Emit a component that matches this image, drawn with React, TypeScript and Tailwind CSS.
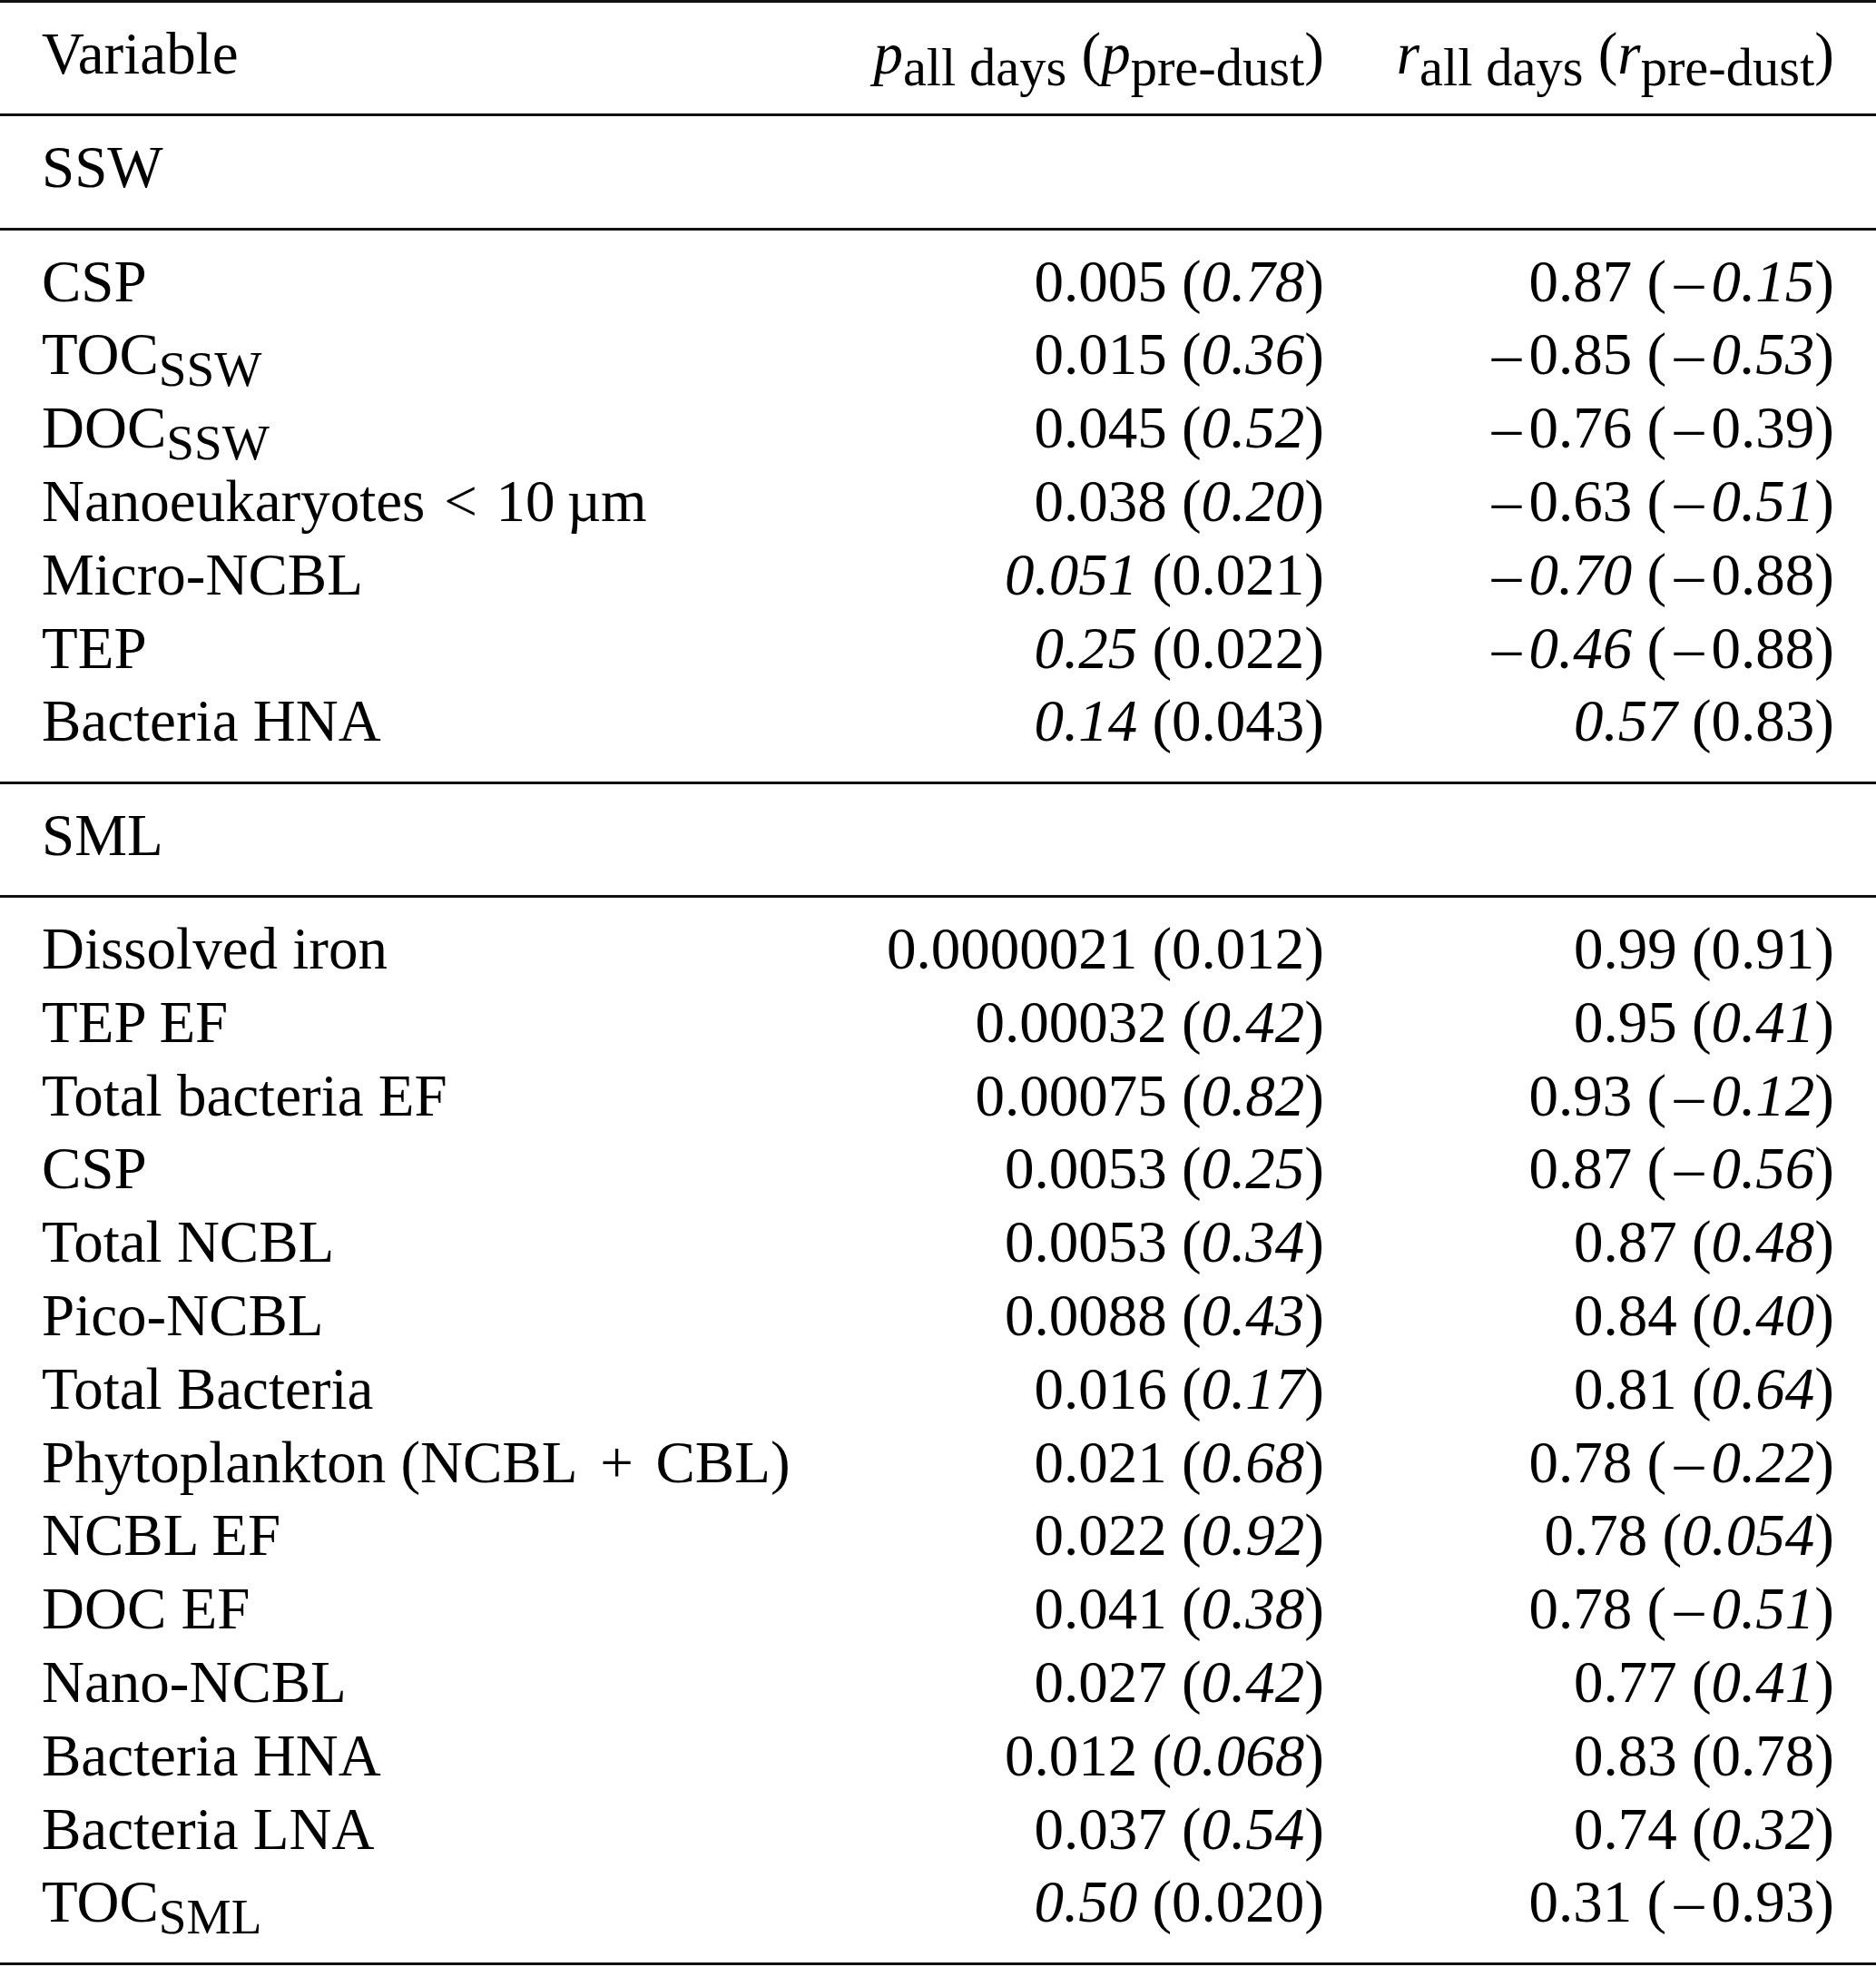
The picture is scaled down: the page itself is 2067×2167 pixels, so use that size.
import type { ReactNode } from "react";

type Row = [ReactNode, ReactNode, ReactNode];

const I = ({ children }: { children: ReactNode }) => (
  <span className="italic">{children}</span>
);

// subscript used in the variable names (TOC_SSW, TOC_SML)
const Sub = ({ children }: { children: ReactNode }) => (
  <span className="text-[0.85em] leading-[0] align-[-0.24em]">{children}</span>
);

// subscript used in the column headings
const HSub = ({ children }: { children: ReactNode }) => (
  <span className="text-[0.9em] leading-[0] align-[-0.22em]">{children}</span>
);

// minus sign: long bar, set a little wider like the typeset original
const M = () => <span className="mx-[0.13em] not-italic">{"\u2013"}</span>;

const header: Row = [
  "Variable",
  <>
    <I>p</I>
    <HSub>all days</HSub> (<I>p</I>
    <HSub>pre-dust</HSub>)
  </>,
  <>
    <I>r</I>
    <HSub>all days</HSub> (<I>r</I>
    <HSub>pre-dust</HSub>)
  </>,
];

const sswRows: Row[] = [
  ["CSP", <>0.005 (<I>0.78</I>)</>, <>0.87 (<I><M />0.15</I>)</>],
  [<>TOC<Sub>SSW</Sub></>, <>0.015 (<I>0.36</I>)</>, <><M />0.85 (<I><M />0.53</I>)</>],
  [<>DOC<Sub>SSW</Sub></>, <>0.045 (<I>0.52</I>)</>, <><M />0.76 (<M />0.39)</>],
  [
    <>
      Nanoeukaryotes<span className="mx-[0.32em]">&lt;</span>10{"\u2009"}µm
    </>,
    <>0.038 (<I>0.20</I>)</>,
    <><M />0.63 (<I><M />0.51</I>)</>,
  ],
  ["Micro-NCBL", <><I>0.051</I> (0.021)</>, <><I><M />0.70</I> (<M />0.88)</>],
  ["TEP", <><I>0.25</I> (0.022)</>, <><I><M />0.46</I> (<M />0.88)</>],
  ["Bacteria HNA", <><I>0.14</I> (0.043)</>, <><I>0.57</I> (0.83)</>],
];

const smlRows: Row[] = [
  ["Dissolved iron", "0.0000021 (0.012)", "0.99 (0.91)"],
  ["TEP EF", <>0.00032 (<I>0.42</I>)</>, <>0.95 (<I>0.41</I>)</>],
  ["Total bacteria EF", <>0.00075 (<I>0.82</I>)</>, <>0.93 (<I><M />0.12</I>)</>],
  ["CSP", <>0.0053 (<I>0.25</I>)</>, <>0.87 (<I><M />0.56</I>)</>],
  ["Total NCBL", <>0.0053 (<I>0.34</I>)</>, <>0.87 (<I>0.48</I>)</>],
  ["Pico-NCBL", <>0.0088 (<I>0.43</I>)</>, <>0.84 (<I>0.40</I>)</>],
  ["Total Bacteria", <>0.016 (<I>0.17</I>)</>, <>0.81 (<I>0.64</I>)</>],
  [
    <>
      Phytoplankton (NCBL<span className="mx-[0.38em]">+</span>CBL)
    </>,
    <>0.021 (<I>0.68</I>)</>,
    <>0.78 (<I><M />0.22</I>)</>,
  ],
  ["NCBL EF", <>0.022 (<I>0.92</I>)</>, <>0.78 (<I>0.054</I>)</>],
  ["DOC EF", <>0.041 (<I>0.38</I>)</>, <>0.78 (<I><M />0.51</I>)</>],
  ["Nano-NCBL", <>0.027 (<I>0.42</I>)</>, <>0.77 (<I>0.41</I>)</>],
  ["Bacteria HNA", <>0.012 (<I>0.068</I>)</>, <>0.83 (0.78)</>],
  ["Bacteria LNA", <>0.037 (<I>0.54</I>)</>, <>0.74 (<I>0.32</I>)</>],
  [<>TOC<Sub>SML</Sub></>, <><I>0.50</I> (0.020)</>, <>0.31 (<M />0.93)</>],
];

const Rule = () => <div className="h-[3px] bg-[#111]" />;

function Group({ rows }: { rows: Row[] }) {
  return (
    <div className="px-[46px] pt-4 pb-[25.5px]">
      {rows.map((r, i) => (
        <div key={i} className="grid grid-cols-[minmax(0,1fr)_700px_562px]">
          <div className="whitespace-nowrap">{r[0]}</div>
          <div className="whitespace-nowrap text-right">{r[1]}</div>
          <div className="whitespace-nowrap text-right">{r[2]}</div>
        </div>
      ))}
    </div>
  );
}

export default function App() {
  return (
    <div className="w-full overflow-hidden bg-white text-black font-['Liberation_Serif','Times_New_Roman',serif] text-[65px] leading-[80.8px]">
      <Rule />
      <Group rows={[header]} />
      <Rule />
      <Group rows={[["SSW", "", ""]]} />
      <Rule />
      <Group rows={sswRows} />
      <Rule />
      <Group rows={[["SML", "", ""]]} />
      <Rule />
      <Group rows={smlRows} />
      <Rule />
    </div>
  );
}
